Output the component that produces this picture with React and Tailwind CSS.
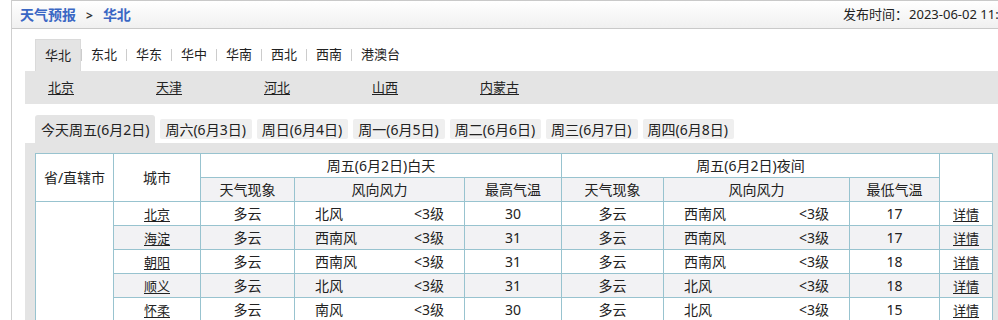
import React from 'react';

const regions = ['华北', '东北', '华东', '华中', '华南', '西北', '西南', '港澳台'];
const provinces = ['北京', '天津', '河北', '山西', '内蒙古'];
const days = ['今天周五(6月2日)', '周六(6月3日)', '周日(6月4日)', '周一(6月5日)', '周二(6月6日)', '周三(6月7日)', '周四(6月8日)'];

const rows = [
  { city: '北京', dw: '多云', dd: '北风', dl: '<3级', hi: 30, nw: '多云', nd: '西南风', nl: '<3级', lo: 17 },
  { city: '海淀', dw: '多云', dd: '西南风', dl: '<3级', hi: 31, nw: '多云', nd: '西南风', nl: '<3级', lo: 17 },
  { city: '朝阳', dw: '多云', dd: '西南风', dl: '<3级', hi: 31, nw: '多云', nd: '西南风', nl: '<3级', lo: 18 },
  { city: '顺义', dw: '多云', dd: '北风', dl: '<3级', hi: 31, nw: '多云', nd: '北风', nl: '<3级', lo: 18 },
  { city: '怀柔', dw: '多云', dd: '南风', dl: '<3级', hi: 30, nw: '多云', nd: '北风', nl: '<3级', lo: 15 },
];

const cell = 'border border-[#98c3cf] h-[24px] p-0 text-center font-normal';

const App = () => {
  return (
    <div className="w-[998px] h-[320px] overflow-hidden bg-white text-[#222] font-['Noto_Sans','Noto_Sans_CJK_SC',sans-serif]">
      <div className="ml-[11px] w-[1100px] border-l border-[#cfcfcf]">
        {/* 标题栏 */}
        <div className="flex items-center h-[29px] border-t border-b border-[#c9c9c9] bg-gradient-to-b from-white to-[#f0f0f0]">
          <div className="w-[831px] pl-[8px] text-[14px] font-bold text-[#3a67c4] leading-none">
            天气预报<span className="text-[#333] text-[12px] mx-[10px]">&gt;</span>华北
          </div>
          <div className="text-[13px] text-[#222] leading-none whitespace-nowrap">
            发布时间：<span className="ml-[1px]">2023-06-02 11:30</span>
          </div>
        </div>

        <div className="pl-[13px]">
          {/* 区域 */}
          <div className="flex mt-[10px] ml-[10px] h-[32px]">
            {regions.map((r, i) => (
              <div key={r} className="flex items-center">
                {i > 0 && <span className="w-px h-[12px] bg-[#cccccc]" />}
                <span
                  className={
                    i === 0
                      ? 'h-[32px] w-[46px] flex items-center justify-center text-[13px] bg-[#e4e4e4] border-t border-l border-r border-[#dadada]'
                      : 'h-[32px] px-[9px] flex items-center justify-center text-[13px]'
                  }
                >
                  {r}
                </span>
              </div>
            ))}
          </div>
          <div className="flex items-center h-[33px] bg-[#e4e4e4] pl-[23px]">
            {provinces.map((p) => (
              <span key={p} className="w-[108px] text-[13px] underline underline-offset-2">
                {p}
              </span>
            ))}
          </div>

          {/* 日期 */}
          <div className="flex items-start gap-[5px] mt-[11px] ml-[10px] h-[28px]">
            {days.map((d, i) => (
              <span
                key={d}
                className={
                  i === 0
                    ? 'h-[28px] px-[6px] flex items-center text-[14px] bg-[#e4e4e4] rounded-t-[3px]'
                    : 'mt-[4px] h-[20px] pl-[5px] pr-[6px] flex items-center text-[14px] bg-[#efefef] rounded-[2px]'
                }
              >
                {d}
              </span>
            ))}
          </div>

          <div className="bg-[#e4e4e4] pt-[10px] pl-[10px] h-[200px]">
            <table className="table-fixed border-collapse bg-white text-[14px] leading-none w-[957px]">
              <colgroup>
                <col className="w-[78px]" />
                <col className="w-[87px]" />
                <col className="w-[94px]" />
                <col className="w-[170px]" />
                <col className="w-[97px]" />
                <col className="w-[102px]" />
                <col className="w-[186px]" />
                <col className="w-[90px]" />
                <col className="w-[53px]" />
              </colgroup>
              <thead>
                <tr>
                  <th rowSpan={2} className={cell}>省/直辖市</th>
                  <th rowSpan={2} className={cell}>城市</th>
                  <th colSpan={3} className={cell}>周五(6月2日)白天</th>
                  <th colSpan={3} className={cell}>周五(6月2日)夜间</th>
                  <th rowSpan={2} className={cell}></th>
                </tr>
                <tr className="bg-[#f2f2f4]">
                  <th className={cell}>天气现象</th>
                  <th className={cell}>风向风力</th>
                  <th className={cell}>最高气温</th>
                  <th className={cell}>天气现象</th>
                  <th className={cell}>风向风力</th>
                  <th className={cell}>最低气温</th>
                </tr>
              </thead>
              <tbody>
                {rows.map((r, i) => (
                  <tr key={r.city} className={i % 2 === 1 ? 'bg-[#f2f2f4]' : ''}>
                    {i === 0 && <td rowSpan={6} className={`${cell} bg-white`}></td>}
                    <td className={cell}>
                      <span className="text-[13px] underline underline-offset-2">{r.city}</span>
                    </td>
                    <td className={cell}>{r.dw}</td>
                    <td className={cell}>
                      <div className="flex justify-between px-[20px]">
                        <span>{r.dd}</span>
                        <span>{r.dl}</span>
                      </div>
                    </td>
                    <td className={cell}>{r.hi}</td>
                    <td className={cell}>{r.nw}</td>
                    <td className={cell}>
                      <div className="flex justify-between px-[20px]">
                        <span>{r.nd}</span>
                        <span>{r.nl}</span>
                      </div>
                    </td>
                    <td className={cell}>{r.lo}</td>
                    <td className={cell}>
                      <span className="text-[13px] underline underline-offset-2">详情</span>
                    </td>
                  </tr>
                ))}
              </tbody>
            </table>
          </div>
        </div>
      </div>
    </div>
  );
};

export default App;
